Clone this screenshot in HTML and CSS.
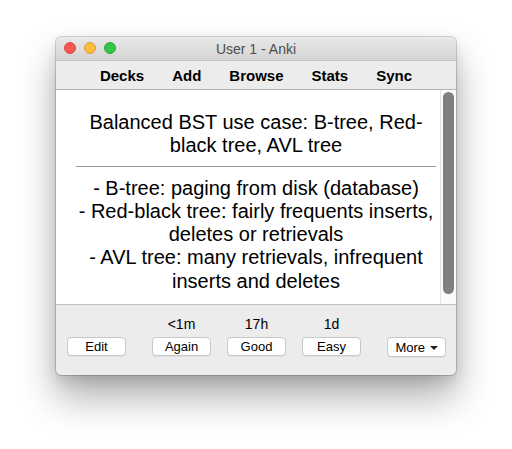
FILE: index.html
```html
<!DOCTYPE html>
<html>
<head>
<meta charset="utf-8">
<link rel="stylesheet" href="styles.css">
</head>
<body>
<div class="window">
  <div class="titlebar">
    <div class="lights">
      <span class="light red"></span>
      <span class="light yellow"></span>
      <span class="light green"></span>
    </div>
    <div class="title">User 1 - Anki</div>
  </div>
  <div class="toolbar">
    <span class="tool">Decks</span>
    <span class="tool">Add</span>
    <span class="tool">Browse</span>
    <span class="tool">Stats</span>
    <span class="tool">Sync</span>
  </div>
  <div class="content">
    <div class="card">
      <div class="question">Balanced BST use case: B-tree, Red-black tree, AVL tree</div>
      <hr class="divider">
      <div class="answer">- B-tree: paging from disk (database)<br>- Red-black tree: fairly frequents inserts, deletes or retrievals<br>- AVL tree: many retrievals, infrequent inserts and deletes</div>
    </div>
    <div class="scrollbar"><div class="thumb"></div></div>
  </div>
  <div class="bottom">
    <div class="col col-edit"><span class="due"></span><button class="btn">Edit</button></div>
    <div class="answers">
      <div class="col"><span class="due">&lt;1m</span><button class="btn">Again</button></div>
      <div class="col"><span class="due">17h</span><button class="btn">Good</button></div>
      <div class="col"><span class="due">1d</span><button class="btn">Easy</button></div>
    </div>
    <div class="col col-more"><span class="due"></span><button class="btn more">More <span class="caret"></span></button></div>
  </div>
</div>
</body>
</html>
```
FILE: styles.css
```css
html, body {
  margin: 0;
  padding: 0;
  background: #ffffff;
}
body {
  font-family: "Liberation Sans", Arial, sans-serif;
  color: #000;
  padding-top: 37px;
  padding-left: 56px;
  min-height: 449px;
  box-sizing: border-box;
}
.window {
  width: 400px;
  height: 338px;
  border-radius: 5px;
  background: #ececec;
  box-shadow: 0 0 0 1px rgba(0,0,0,0.16), 0 22px 38px rgba(0,0,0,0.32), 0 6px 14px rgba(0,0,0,0.12);
  display: flex;
  flex-direction: column;
}
.titlebar {
  flex: none;
  height: 23px;
  position: relative;
  border-radius: 5px 5px 0 0;
  background: linear-gradient(#e9e9e9, #d4d4d4);
  display: flex;
  align-items: center;
  justify-content: center;
}
.lights {
  position: absolute;
  left: 8px;
  top: 5px;
  display: flex;
  gap: 8px;
}
.light {
  width: 12px;
  height: 12px;
  border-radius: 50%;
  box-sizing: border-box;
}
.red { background: #fc5753; border: 1px solid #df4744; }
.yellow { background: #fdbc40; border: 1px solid #de9f34; }
.green { background: #33c748; border: 1px solid #27aa35; }
.title {
  font-size: 14px;
  color: #4d4d4d;
}
.toolbar {
  flex: none;
  height: 30px;
  box-sizing: border-box;
  border-top: 1px solid #c4c4c4;
  border-bottom: 1px solid #b4b4b4;
  padding-left: 0;
  display: flex;
  align-items: center;
  justify-content: center;
  gap: 28px;
  font-weight: bold;
  font-size: 15px;
}
.content {
  flex: none;
  height: 214px;
  background: #fff;
  border-bottom: 1px solid #c2c2c2;
  display: flex;
}
.card {
  flex: 1;
  padding: 21px 4px 0 20px;
  text-align: center;
  font-size: 20px;
  line-height: 23.25px;
}
.divider {
  border: none;
  border-top: 1px solid #9a9a9a;
  margin: 8px 0 10px 0;
}
.scrollbar {
  flex: none;
  width: 16px;
  box-sizing: border-box;
  border-left: 1px solid #e2e2e2;
  background: #fafafa;
  padding: 2px 2px 0 2px;
}
.thumb {
  width: 11px;
  height: 202px;
  border-radius: 6px;
  background: #7f7f7f;
}
.bottom {
  flex: 1;
  display: flex;
  padding: 11px 10px 0 11px;
  border-radius: 0 0 5px 5px;
}
.answers {
  display: flex;
  gap: 16px;
  margin-left: 26px;
}
.col {
  display: flex;
  flex-direction: column;
  align-items: center;
}
.col-more {
  margin-left: auto;
}
.due {
  display: block;
  height: 16px;
  font-size: 14px;
  line-height: 16px;
  margin-bottom: 5px;
}
.btn {
  width: 59px;
  height: 19px;
  padding: 0;
  border: 1px solid #c8c8c8;
  border-radius: 4px;
  background: #fff;
  font-family: "Liberation Sans", Arial, sans-serif;
  font-size: 13px;
  line-height: 17px;
  color: #000;
  box-shadow: 0 1px 0 rgba(0,0,0,0.05);
}
.more {
  height: 20px;
  padding-top: 1px;
}
.caret {
  display: inline-block;
  width: 0;
  height: 0;
  border-left: 4px solid transparent;
  border-right: 4px solid transparent;
  border-top: 4px solid #222;
  vertical-align: 2px;
  margin-left: 1px;
}
```
